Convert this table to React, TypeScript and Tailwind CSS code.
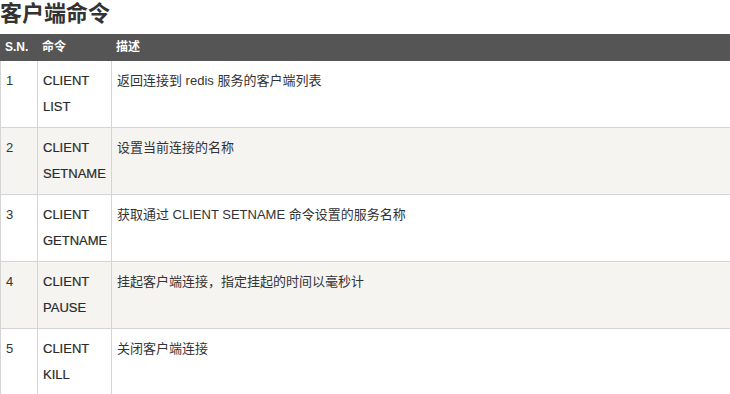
import React from "react";

const rows = [
  { sn: "1", cmd: "CLIENT LIST", desc: "返回连接到 redis 服务的客户端列表" },
  { sn: "2", cmd: "CLIENT SETNAME", desc: "设置当前连接的名称" },
  { sn: "3", cmd: "CLIENT GETNAME", desc: "获取通过 CLIENT SETNAME 命令设置的服务名称" },
  { sn: "4", cmd: "CLIENT PAUSE", desc: "挂起客户端连接，指定挂起的时间以毫秒计" },
  { sn: "5", cmd: "CLIENT KILL", desc: "关闭客户端连接" },
];

const font = "font-['Liberation_Sans','Noto_Sans_CJK_SC',sans-serif]";

export default function App() {
  return (
    <div className={`w-[730px] h-[394px] overflow-hidden bg-white text-[#333] ${font}`}>
      <h2 className="text-[22px] leading-[27px] font-bold text-[#333]">客户端命令</h2>
      <table className="mt-[7px] w-[740px] border-collapse table-fixed">
        <colgroup>
          <col className="w-[37px]" />
          <col className="w-[74px]" />
          <col />
        </colgroup>
        <thead>
          <tr>
            <th className="bg-[#555] border border-[#555] text-white text-[12px] leading-[19px] font-bold text-left align-top px-[4px] py-[3px]">
              S.N.
            </th>
            <th className="bg-[#555] border border-[#555] text-white text-[12px] leading-[19px] font-bold text-left align-top px-[4px] py-[3px]">
              命令
            </th>
            <th className="bg-[#555] border border-[#555] text-white text-[12px] leading-[19px] font-bold text-left align-top px-[4px] py-[3px]">
              描述
            </th>
          </tr>
        </thead>
        <tbody>
          {rows.map((r, i) => (
            <tr key={r.sn} className={i % 2 === 1 ? "bg-[#f6f4f0]" : "bg-white"}>
              <td className="border border-[#d4d4d4] text-[13px] leading-[26px] align-top px-[5px] py-[7px]">
                {r.sn}
              </td>
              <td className="border border-[#d4d4d4] text-[13px] leading-[26px] align-top px-[5px] py-[7px] text-[#2a2a2a] [-webkit-text-stroke:0.2px_#2a2a2a]">
                {r.cmd}
              </td>
              <td className="border border-[#d4d4d4] text-[13px] leading-[26px] align-top px-[5px] py-[7px]">
                {r.desc}
              </td>
            </tr>
          ))}
        </tbody>
      </table>
    </div>
  );
}
